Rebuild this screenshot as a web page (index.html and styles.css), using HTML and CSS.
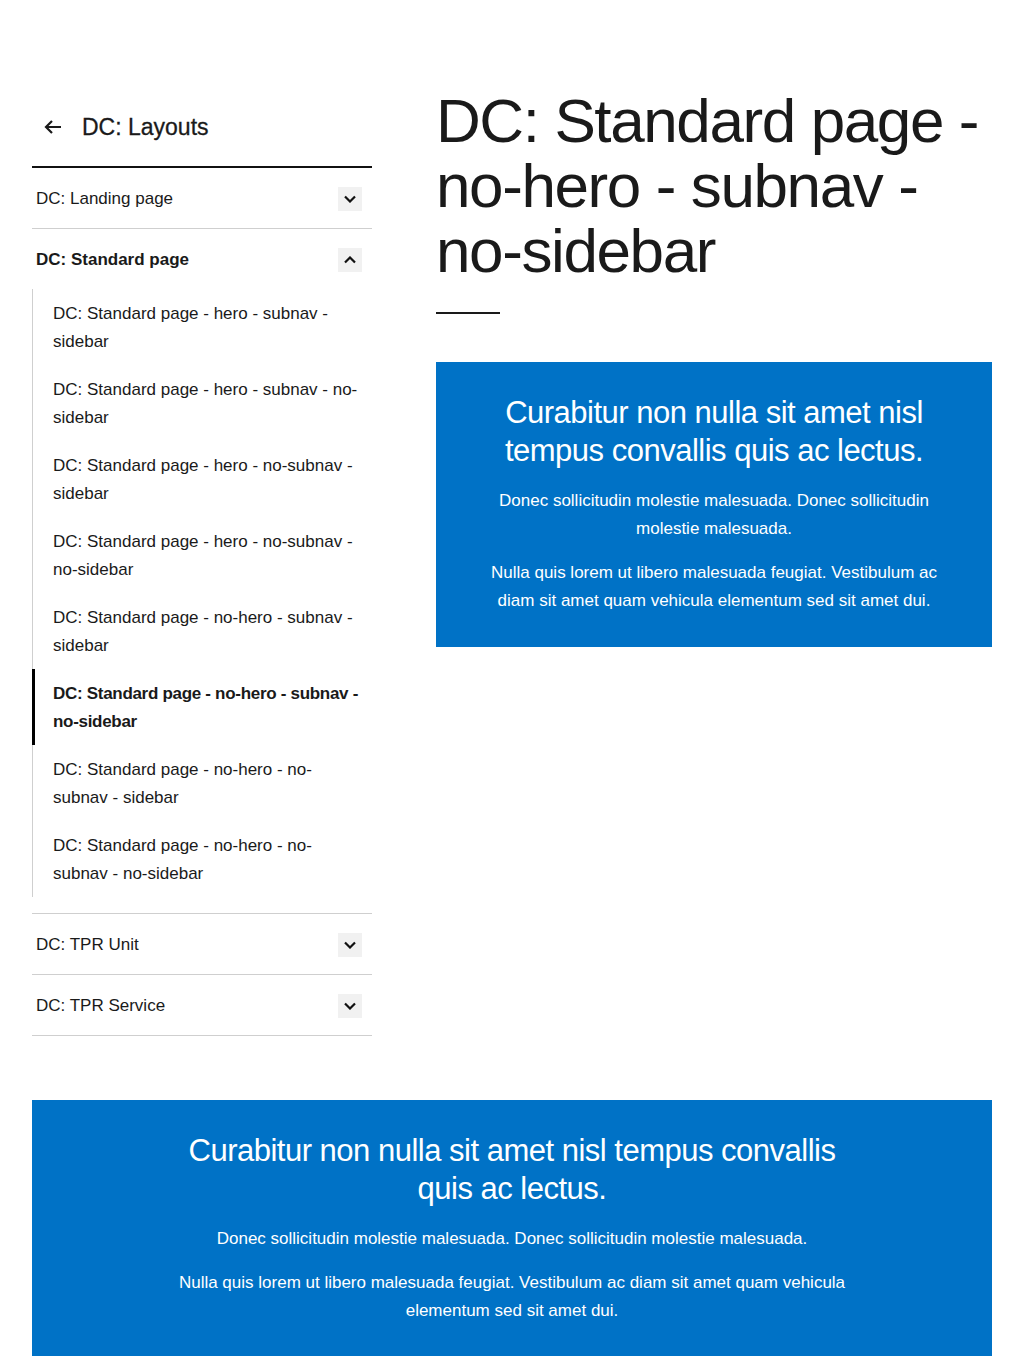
FILE: index.html
```html
<!DOCTYPE html>
<html lang="en">
<head>
<meta charset="utf-8">
<title>DC: Standard page - no-hero - subnav - no-sidebar</title>
<link rel="stylesheet" href="styles.css">
</head>
<body>
<div class="page">
  <div class="layout">
    <aside class="sidebar">
      <div class="side-head">
        <svg class="back" width="20" height="16" viewBox="0 0 20 16" aria-hidden="true"><path d="M18 8H3M9 2L3 8l6 6" fill="none" stroke="#1a1a1a" stroke-width="2.2"/></svg>
        <span class="side-title">DC: Layouts</span>
      </div>
      <ul class="menu">
        <li class="menu-item">
          <div class="menu-row"><span>DC: Landing page</span><span class="chev"><svg width="12" height="8" viewBox="0 0 12 8"><path d="M1 1.5l5 5 5-5" fill="none" stroke="#111" stroke-width="2.2"/></svg></span></div>
        </li>
        <li class="menu-item open">
          <div class="menu-row"><span class="bold">DC: Standard page</span><span class="chev"><svg width="12" height="8" viewBox="0 0 12 8"><path d="M1 6.5l5-5 5 5" fill="none" stroke="#111" stroke-width="2.2"/></svg></span></div>
          <ul class="submenu">
            <li class="sub">DC: Standard page - hero - subnav - sidebar</li>
            <li class="sub">DC: Standard page - hero - subnav - no-sidebar</li>
            <li class="sub">DC: Standard page - hero - no-subnav - sidebar</li>
            <li class="sub">DC: Standard page - hero - no-subnav - no-sidebar</li>
            <li class="sub">DC: Standard page - no-hero - subnav - sidebar</li>
            <li class="sub active">DC: Standard page - no-hero - subnav - no-sidebar</li>
            <li class="sub">DC: Standard page - no-hero - no-subnav - sidebar</li>
            <li class="sub">DC: Standard page - no-hero - no-subnav - no-sidebar</li>
          </ul>
        </li>
        <li class="menu-item">
          <div class="menu-row"><span>DC: TPR Unit</span><span class="chev"><svg width="12" height="8" viewBox="0 0 12 8"><path d="M1 1.5l5 5 5-5" fill="none" stroke="#111" stroke-width="2.2"/></svg></span></div>
        </li>
        <li class="menu-item">
          <div class="menu-row"><span>DC: TPR Service</span><span class="chev"><svg width="12" height="8" viewBox="0 0 12 8"><path d="M1 1.5l5 5 5-5" fill="none" stroke="#111" stroke-width="2.2"/></svg></span></div>
        </li>
      </ul>
    </aside>
    <main class="main">
      <h1 class="title">DC: Standard page - no-hero - subnav - no-sidebar</h1>
      <div class="rule"></div>
      <section class="promo">
        <h2 class="promo-title">Curabitur non nulla sit amet nisl tempus convallis quis ac lectus.</h2>
        <p>Donec sollicitudin molestie malesuada. Donec sollicitudin molestie malesuada.</p>
        <p>Nulla quis lorem ut libero malesuada feugiat. Vestibulum ac diam sit amet quam vehicula elementum sed sit amet dui.</p>
      </section>
    </main>
  </div>
  <section class="promo wide">
    <div class="wide-inner">
      <h2 class="promo-title">Curabitur non nulla sit amet nisl tempus convallis quis ac lectus.</h2>
      <p>Donec sollicitudin molestie malesuada. Donec sollicitudin molestie malesuada.</p>
      <p>Nulla quis lorem ut libero malesuada feugiat. Vestibulum ac diam sit amet quam vehicula elementum sed sit amet dui.</p>
    </div>
  </section>
</div>
</body>
</html>
```
FILE: styles.css
```css
* { box-sizing: border-box; }
html, body { margin: 0; padding: 0; background: #fff; }
body {
  font-family: "Liberation Sans", Arial, sans-serif;
  color: #1a1a1a;
  font-size: 17px;
  line-height: 28px;
}
.page { padding: 88px 32px 0; }
.layout { display: flex; gap: 64px; }
.sidebar { width: 340px; flex: none; }
.main { flex: 1; min-width: 0; }

.side-head {
  height: 80px;
  display: flex;
  align-items: center;
  gap: 19px;
  padding-left: 11px;
  border-bottom: 2px solid #111;
}
.back { display: block; }
.side-title { font-size: 23px; line-height: 30px; -webkit-text-stroke: 0.3px #1a1a1a; }

.menu, .submenu { list-style: none; margin: 0; padding: 0; }
.menu-item { border-bottom: 1px solid #cfcfcf; }
.menu-row {
  height: 60px;
  display: flex;
  align-items: center;
  justify-content: space-between;
  padding: 1px 10px 0 4px;
}
.bold { font-weight: 700; }
.chev {
  width: 24px; height: 24px;
  background: #f1f1f1;
  display: flex; align-items: center; justify-content: center;
}
.chev svg { display: block; }
.submenu {
  border-left: 1px solid #cfcfcf;
  margin-bottom: 16px;
}
.sub {
  padding: 11px 12px 9px 18px;
  margin-left: -1px;
  border-left: 3px solid transparent;
}
.sub.active { border-left-color: #000; font-weight: 700; letter-spacing: -0.3px; }

.title {
  margin: 0;
  font-weight: 400;
  font-size: 62px;
  line-height: 65px;
  letter-spacing: -1.4px;
  color: #1a1a1a;
}
.rule { width: 64px; height: 2px; background: #1a1a1a; margin: 29px 0 48px; }

.promo {
  background: #0072c6;
  color: #fff;
  text-align: center;
  padding: 32px 48px;
}
.promo-title {
  margin: 0 0 17px;
  font-weight: 400;
  font-size: 31px;
  line-height: 38px;
  letter-spacing: -0.5px;
}
.promo p { margin: 0 0 16px; }
.promo p:last-child { margin-bottom: 0; }

.wide { margin-top: 64px; padding: 32px 0 48px; }
.wide-inner { max-width: 700px; margin: 0 auto; }
```
